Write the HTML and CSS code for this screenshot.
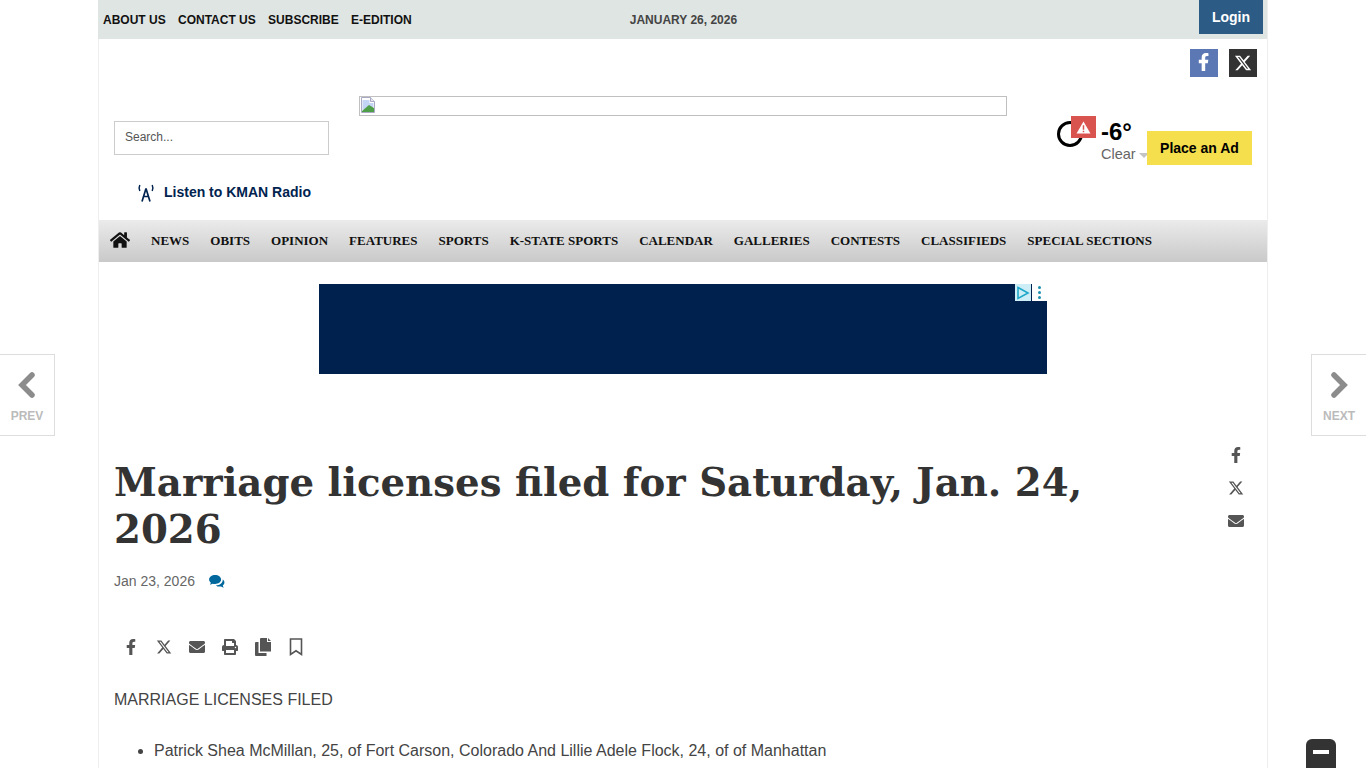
FILE: index.html
```html
<!DOCTYPE html>
<html lang="en">
<head>
    <meta charset="UTF-8">
    <meta name="viewport" content="width=device-width, initial-scale=1.0">
    <title>Marriage licenses filed for Saturday, Jan. 24, 2026</title>
    <link rel="stylesheet" href="styles.css">
</head>
<body>

<a class="pager pager-prev" href="#">
    <svg class="pager-arrow" viewBox="0 0 20 26"><polyline points="15,3 5,13 15,23"/></svg>
    <span>PREV</span>
</a>
<a class="pager pager-next" href="#">
    <svg class="pager-arrow" viewBox="0 0 20 26"><polyline points="5,3 15,13 5,23"/></svg>
    <span>NEXT</span>
</a>

<div class="page">

    <div class="topbar">
        <nav class="toplinks">
            <a href="#">ABOUT US</a>
            <a href="#">CONTACT US</a>
            <a href="#">SUBSCRIBE</a>
            <a href="#">E-EDITION</a>
        </nav>
        <div class="topdate">JANUARY 26, 2026</div>
        <a class="login" href="#">Login</a>
    </div>

    <header class="masthead">
        <div class="social">
            <a class="social-btn social-fb" href="#">
                <svg viewBox="0 0 320 512"><path d="M279.14 288l14.22-92.66h-88.91v-60.13c0-25.35 12.42-50.06 52.24-50.06h40.42V6.26S260.43 0 225.36 0c-73.22 0-121.08 44.38-121.08 124.72v70.62H22.89V288h81.39v224h100.17V288z"/></svg>
            </a>
            <a class="social-btn social-x" href="#">
                <svg viewBox="0 0 512 512"><path d="M389.2 48h70.6L305.6 224.2 487 464H345L233.7 318.6 106.5 464H35.8L200.7 275.5 26.8 48H172.4L272.9 180.9 389.2 48zM364.4 421.8h39.1L151.1 88h-42L364.4 421.8z"/></svg>
            </a>
        </div>
        <div class="mast-row">
            <div class="mast-left">
                <input class="search" type="text" placeholder="Search...">
                <a class="radio" href="#">
                    <svg viewBox="0 0 20 18"><path class="radio-line" d="M10 4.500L6 17.500M10 4.500l4 13M7.500 12.500h5"/><path class="radio-wave" d="M3.800 1Q2.400 4 3.800 7M16.200 1Q17.600 4 16.200 7"/></svg>
                    Listen to KMAN Radio
                </a>
            </div>
            <div class="banner">
                <svg class="broken" viewBox="0 0 16 16">
                    <path d="M1.500.5h9l4 4v11h-13z" fill="#fff" stroke="#a9a9c4"/>
                    <path d="M10.500.5v4h4" fill="#e4e4ee" stroke="#a9a9c4"/>
                    <path d="M2.500 3h7v3h4v4l-11 3z" fill="#c4d4f4"/>
                    <path d="M2 14l7-6 5 3v4H2z" fill="#4f9f4a"/>
                </svg>
            </div>
            <div class="mast-right">
                <div class="weather">
                    <div class="weather-icon">
                        <span class="weather-ring"></span>
                        <span class="weather-alert">
                            <svg viewBox="0 0 16 14"><path d="M8 .5l7.500 13H.5z" fill="#fff"/><path d="M7.200 4.500h1.600v5H7.200zM7.200 10.500h1.600V12H7.200z" fill="#d9534f"/></svg>
                        </span>
                    </div>
                    <div class="weather-text">
                        <div class="weather-temp">-6°</div>
                        <div class="weather-sky">Clear<span class="caret"></span></div>
                    </div>
                </div>
                <a class="place-ad" href="#">Place an Ad</a>
            </div>
        </div>
    </header>

    <nav class="mainnav">
        <a class="nav-home" href="#">
            <svg viewBox="0 0 576 512"><path d="M280.37 148.26L96 300.11V464a16 16 0 0 0 16 16l112.06-.29a16 16 0 0 0 15.92-16V368a16 16 0 0 1 16-16h64a16 16 0 0 1 16 16v95.64a16 16 0 0 0 16 16.05L464 480a16 16 0 0 0 16-16V300L295.67 148.26a12.19 12.19 0 0 0-15.3 0zM571.6 251.47L488 182.56V44.05a12 12 0 0 0-12-12h-56a12 12 0 0 0-12 12v72.61L318.47 43a48 48 0 0 0-61 0L4.34 251.47a12 12 0 0 0-1.6 16.9l25.5 31A12 12 0 0 0 45.15 301l235.22-193.74a12.19 12.19 0 0 1 15.3 0L530.9 301a12 12 0 0 0 16.9-1.6l25.5-31a12 12 0 0 0-1.7-16.93z"/></svg>
        </a>
        <a href="#">NEWS</a>
        <a href="#">OBITS</a>
        <a href="#">OPINION</a>
        <a href="#">FEATURES</a>
        <a href="#">SPORTS</a>
        <a href="#">K-STATE SPORTS</a>
        <a href="#">CALENDAR</a>
        <a href="#">GALLERIES</a>
        <a href="#">CONTESTS</a>
        <a href="#">CLASSIFIEDS</a>
        <a href="#">SPECIAL SECTIONS</a>
    </nav>

    <div class="ad">
        <div class="ad-choices">
            <span class="ad-play"><svg viewBox="0 0 14 14"><path d="M2 1.500l10 5.500-10 5.500z" fill="none" stroke="#1ea7c9" stroke-width="1.600"/></svg></span>
            <span class="ad-dots"><i></i><i></i><i></i></span>
        </div>
    </div>

    <div class="article">
        <main class="article-main">
            <h1>Marriage licenses filed for Saturday, Jan. 24, 2026</h1>
            <div class="byline">
                <span>Jan 23, 2026</span>
                <svg class="comment-icon" viewBox="0 0 17 14">
                    <path d="M6.500 0C3 0 0 2 0 4.800c0 1.400.7 2.600 1.900 3.500L.9 10.600l3-1.300c.8.200 1.700.3 2.600.3 3.500 0 6.400-2.100 6.400-4.800S10 0 6.500 0z"/>
                    <path d="M14.600 4.500c.1.300.1.500.1.800 0 3.200-3.200 5.700-7.400 5.900 1 .9 2.500 1.300 4 1.300.5 0 1-.1 1.400-.2l3 1.300-1-2.300c1.100-.8 1.800-2 1.800-3.200 0-1.500-.8-2.800-1.900-3.600z"/>
                </svg>
            </div>
            <div class="tools">
                <a href="#"><svg viewBox="0 0 320 512"><path d="M279.14 288l14.22-92.66h-88.91v-60.13c0-25.35 12.42-50.06 52.24-50.06h40.42V6.26S260.43 0 225.36 0c-73.22 0-121.08 44.38-121.08 124.72v70.62H22.89V288h81.39v224h100.17V288z"/></svg></a>
                <a href="#"><svg viewBox="0 0 512 512"><path d="M389.2 48h70.6L305.6 224.2 487 464H345L233.7 318.6 106.5 464H35.8L200.7 275.5 26.8 48H172.4L272.9 180.9 389.2 48zM364.4 421.8h39.1L151.1 88h-42L364.4 421.8z"/></svg></a>
                <a href="#"><svg viewBox="0 0 512 512"><path d="M502.3 190.8c3.900-3.100 9.700-.2 9.700 4.700V400c0 26.500-21.500 48-48 48H48c-26.500 0-48-21.500-48-48V195.600c0-5 5.700-7.800 9.700-4.700 22.400 17.400 52.100 39.500 154.100 113.600 21.100 15.400 56.700 47.800 92.200 47.600 35.700.3 72-32.800 92.300-47.600 102-74.100 131.600-96.300 154-113.700zM256 320c23.200.4 56.600-29.200 73.400-41.400 132.700-96.300 142.800-104.700 173.400-128.700 5.800-4.500 9.200-11.500 9.200-18.900v-19c0-26.500-21.500-48-48-48H48C21.500 64 0 85.500 0 112v19c0 7.400 3.400 14.300 9.200 18.900 30.600 23.900 40.700 32.400 173.400 128.700 16.800 12.200 50.200 41.800 73.400 41.400z"/></svg></a>
                <a href="#"><svg viewBox="0 0 512 512"><path d="M448 192V77.250c0-8.490-3.370-16.620-9.370-22.630L393.370 9.370c-6-6-14.140-9.370-22.630-9.370H96C78.330 0 64 14.330 64 32v160c-35.350 0-64 28.650-64 64v112c0 8.840 7.160 16 16 16h48v96c0 17.670 14.330 32 32 32h320c17.670 0 32-14.330 32-32v-96h48c8.840 0 16-7.160 16-16V256c0-35.350-28.650-64-64-64zm-64 256H128v-96h256v96zm0-224H128V64h192v48c0 8.840 7.160 16 16 16h48v96zm48 72c-13.250 0-24-10.750-24-24 0-13.260 10.750-24 24-24s24 10.740 24 24c0 13.250-10.750 24-24 24z"/></svg></a>
                <a href="#"><svg class="tool-copy" viewBox="0 0 16 18"><path d="M6 0h6v4h4v9.500H5V1a1 1 0 0 1 1-1zM13 0l3 3h-3z"/><path d="M3.500 4v11h8v3H1a1 1 0 0 1-1-1V5a1 1 0 0 1 1-1z"/></svg></a>
                <a href="#"><svg class="tool-mark" viewBox="0 0 14 18"><path class="tool-outline" d="M1.500 1h11v15.500L7 12.800 1.500 16.500z"/></svg></a>
            </div>
            <p class="lead">MARRIAGE LICENSES FILED</p>
            <ul class="licenses">
                <li>Patrick Shea McMillan, 25, of Fort Carson, Colorado And Lillie Adele Flock, 24, of of Manhattan</li>
            </ul>
        </main>
        <aside class="share">
            <a href="#"><svg viewBox="0 0 320 512"><path d="M279.14 288l14.22-92.66h-88.91v-60.13c0-25.35 12.42-50.06 52.24-50.06h40.42V6.26S260.43 0 225.36 0c-73.22 0-121.08 44.38-121.08 124.72v70.62H22.89V288h81.39v224h100.17V288z"/></svg></a>
            <a href="#"><svg viewBox="0 0 512 512"><path d="M389.2 48h70.6L305.6 224.2 487 464H345L233.7 318.6 106.5 464H35.8L200.7 275.5 26.8 48H172.4L272.9 180.9 389.2 48zM364.4 421.8h39.1L151.1 88h-42L364.4 421.8z"/></svg></a>
            <a href="#"><svg viewBox="0 0 512 512"><path d="M502.3 190.8c3.900-3.100 9.700-.2 9.700 4.700V400c0 26.500-21.500 48-48 48H48c-26.500 0-48-21.500-48-48V195.600c0-5 5.700-7.800 9.700-4.700 22.400 17.400 52.100 39.500 154.100 113.600 21.100 15.400 56.700 47.800 92.200 47.600 35.700.3 72-32.800 92.300-47.600 102-74.100 131.600-96.300 154-113.700zM256 320c23.200.4 56.600-29.200 73.400-41.400 132.700-96.300 142.800-104.700 173.400-128.700 5.800-4.500 9.200-11.500 9.200-18.900v-19c0-26.500-21.500-48-48-48H48C21.500 64 0 85.500 0 112v19c0 7.400 3.400 14.300 9.200 18.900 30.600 23.900 40.700 32.400 173.400 128.700 16.800 12.200 50.200 41.800 73.400 41.400z"/></svg></a>
        </aside>
    </div>
</div>

<a class="collapse" href="#"><span></span></a>

</body>
</html>
```

FILE: styles.css
```css
html, body {
    height: 100%;
    overflow: hidden;
}

body {
    margin: 0;
    background: #fff;
    color: #444;
    font-family: "Liberation Sans", Arial, sans-serif;
}

a {
    color: inherit;
    text-decoration: none;
}

.page {
    box-sizing: border-box;
    width: 1170px;
    margin-left: 98px;
    min-height: 768px;
    border-left: 1px solid #eee;
    border-right: 1px solid #eee;
}

/* top strip */
.topbar {
    position: relative;
    display: flex;
    align-items: center;
    height: 39px;
    margin-left: -1px;
    background: #dfe5e3;
}

.toplinks {
    display: flex;
    gap: 12.300px;
    padding-left: 5px;
    font-size: 12px;
    font-weight: bold;
    color: #111;
}

.topdate {
    margin-left: 218px;
    font-size: 12px;
    font-weight: bold;
    color: #444;
}

.login {
    position: absolute;
    top: 0;
    right: 4px;
    width: 64px;
    height: 34px;
    line-height: 34px;
    text-align: center;
    background: #2c5b85;
    color: #fff;
    font-size: 14px;
    font-weight: bold;
}

/* masthead */
.masthead {
    height: 181px;
}

.social {
    display: flex;
    justify-content: flex-end;
    gap: 11px;
    padding: 10px 10px 0 0;
}

.social-btn {
    display: flex;
    align-items: center;
    justify-content: center;
    width: 28px;
    height: 28px;
}

.social-btn svg {
    height: 18px;
    fill: #fff;
}

.social-fb svg {
    margin-top: -3px;
}

.social-fb {
    background: #5b78b5;
}

.social-x {
    background: #333;
}

.mast-row {
    display: flex;
    align-items: flex-start;
    padding: 19px 15px 0;
}

.mast-left {
    width: 215px;
    padding-top: 25px;
}

.search {
    display: block;
    box-sizing: border-box;
    width: 215px;
    height: 34px;
    padding: 0 10px 2px;
    border: 1px solid #ccc;
    outline: none;
    font-family: inherit;
    font-size: 12px;
}

.search::placeholder {
    color: #555;
    opacity: 1;
}

.radio {
    display: flex;
    align-items: center;
    gap: 8px;
    margin: 26px 0 0 22px;
    font-size: 14px;
    font-weight: bold;
    color: #00234f;
    white-space: nowrap;
}

.radio svg {
    width: 20px;
    height: 18px;
    margin-top: 3px;
}

.radio-line {
    fill: none;
    stroke: #00234f;
    stroke-width: 1.7;
}

.radio-wave {
    fill: none;
    stroke: #00234f;
    stroke-width: 1.500;
}

.banner {
    box-sizing: border-box;
    width: 648px;
    height: 20px;
    margin-left: 30px;
    border: 1px solid #c0c0c0;
}

.broken {
    display: block;
    width: 16px;
    height: 16px;
}

.mast-right {
    display: flex;
    align-items: flex-start;
    margin-left: auto;
    padding-top: 20px;
}

.weather {
    display: flex;
    width: 90px;
}

.weather-icon {
    position: relative;
    width: 44px;
    height: 36px;
    flex-shrink: 0;
}

.weather-ring {
    position: absolute;
    top: 5px;
    left: 0;
    box-sizing: border-box;
    width: 26px;
    height: 26px;
    border: 3px solid #000;
    border-radius: 50%;
}

.weather-alert {
    position: absolute;
    top: 0;
    left: 14px;
    display: flex;
    align-items: center;
    justify-content: center;
    width: 25px;
    height: 22px;
    background: #d9534f;
}

.weather-alert svg {
    width: 15px;
    height: 13px;
}

.weather-text {
    min-width: 46px;
}

.weather-temp {
    margin-top: 3px;
    font-size: 24px;
    line-height: 25px;
    font-weight: bold;
    color: #000;
}

.weather-sky {
    margin-top: 2px;
    font-size: 14.500px;
    line-height: 17px;
    color: #666;
    white-space: nowrap;
}

.caret {
    display: inline-block;
    margin-left: 3px;
    vertical-align: 1px;
    border-top: 5px solid #c4c4c4;
    border-left: 5px solid transparent;
    border-right: 5px solid transparent;
}

.place-ad {
    width: 105px;
    height: 34px;
    margin-top: 15px;
    line-height: 34px;
    text-align: center;
    background: #f5df4d;
    color: #000;
    font-size: 14px;
    font-weight: bold;
}

/* main nav */
.mainnav {
    display: flex;
    align-items: center;
    height: 42px;
    padding-left: 10px;
    background: linear-gradient(to bottom, #ebebeb, #c9c9c9);
    font-family: "Liberation Serif", "Times New Roman", serif;
    font-size: 13px;
    font-weight: bold;
    color: #111;
}

.mainnav a {
    padding: 0 10.5px;
}

.mainnav .nav-home {
    display: flex;
    padding: 0 10.5px 3px 1px;
}

.nav-home svg {
    width: 20px;
    height: 18px;
    fill: #111;
}

/* ad */
.ad {
    position: relative;
    width: 728px;
    height: 90px;
    margin: 22px auto 0;
    background: #00214d;
}

.ad-choices {
    position: absolute;
    top: 0;
    right: 0;
    display: flex;
    gap: 1px;
    height: 17px;
}

.ad-choices span {
    display: flex;
    align-items: center;
    justify-content: center;
    background: #fff;
}

.ad-play {
    width: 16px;
    background: #cdeef6 !important;
}

.ad-play svg {
    width: 14px;
    height: 14px;
}

.ad-dots {
    flex-direction: column;
    gap: 2px;
    width: 15px;
}

.ad-dots i {
    width: 3px;
    height: 3px;
    background: #1b8fb0;
    border-radius: 50%;
}

/* article */
.article {
    display: flex;
    justify-content: space-between;
    padding: 85px 15px 0;
}

.article-main {
    width: 980px;
}

h1 {
    margin: 0;
    font-family: "DejaVu Serif", Georgia, serif;
    font-size: 38.700px;
    line-height: 47px;
    font-weight: bold;
    color: #333;
}

.byline {
    display: flex;
    align-items: center;
    gap: 14px;
    margin-top: 18px;
    font-size: 14px;
    line-height: 20px;
    color: #666;
}

.comment-icon {
    width: 16px;
    height: 13px;
    fill: #00689d;
}

.tools {
    display: flex;
    align-items: center;
    height: 20px;
    margin-top: 46px;
    padding-left: 8px;
}

.tools a {
    display: flex;
    justify-content: center;
    width: 17px;
    margin-right: 16px;
}

.tools svg {
    height: 16px;
    fill: #555;
}

.tools .tool-copy {
    height: 18px;
}

.tools .tool-mark {
    height: 18px;
}

.tool-outline {
    fill: none;
    stroke: #555;
    stroke-width: 1.6;
}

.lead {
    margin: 31px 0 0;
    font-size: 16px;
    line-height: 24px;
}

.licenses {
    margin: 27px 0 0;
    padding-left: 40px;
    font-size: 16px;
    line-height: 24px;
}

.share {
    display: flex;
    flex-direction: column;
    align-items: center;
    gap: 17px;
    width: 32px;
    padding: 0;
    margin-top: -12px;
}

.share a {
    display: flex;
    align-items: center;
    height: 16px;
}

.share svg {
    height: 16px;
    fill: #555;
}

/* prev / next */
.pager {
    position: fixed;
    top: 354px;
    box-sizing: border-box;
    display: flex;
    flex-direction: column;
    align-items: center;
    width: 55px;
    height: 82px;
    padding-top: 17px;
    background: #fff;
    border: 1px solid #ddd;
    color: #bbb;
    font-size: 12px;
    font-weight: bold;
}

.pager-prev {
    left: 0;
    border-left: none;
}

.pager-next {
    right: 0;
    border-right: none;
}

.pager-arrow {
    width: 20px;
    height: 26px;
    margin-bottom: 11px;
}

.pager-arrow polyline {
    fill: none;
    stroke: #8c8c8c;
    stroke-width: 5.5;
    stroke-linecap: round;
    stroke-linejoin: miter;
}

.collapse {
    position: fixed;
    left: 1306px;
    bottom: 0;
    display: flex;
    justify-content: center;
    width: 30px;
    height: 29px;
    padding-top: 11px;
    box-sizing: border-box;
    background: #333;
    border-radius: 6px 6px 0 0;
}

.collapse span {
    width: 16px;
    height: 4px;
    background: #fff;
}
```
